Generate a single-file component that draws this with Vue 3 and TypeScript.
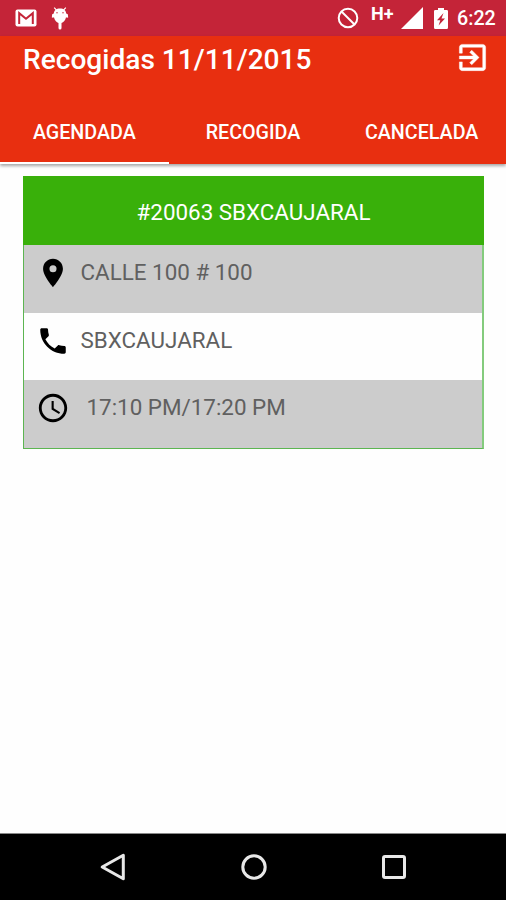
<script setup lang="ts">
interface Detail {
  kind: string
  icon: string
  text: string
}

const tabs: string[] = ['AGENDADA', 'RECOGIDA', 'CANCELADA']
const activeTab = 'AGENDADA'

const details: Detail[] = [
  {
    kind: 'address',
    icon: 'M12 2C8.13 2 5 5.13 5 9c0 5.25 7 13 7 13s7-7.75 7-13c0-3.87-3.13-7-7-7zm0 9.5a2.5 2.5 0 0 1 0-5 2.5 2.5 0 0 1 0 5z',
    text: 'CALLE 100 # 100',
  },
  {
    kind: 'contact',
    icon: 'M6.62 10.79c1.44 2.83 3.76 5.14 6.59 6.59l2.2-2.2c.27-.27.67-.36 1.02-.24 1.12.37 2.33.57 3.57.57.55 0 1 .45 1 1V20c0 .55-.45 1-1 1-9.39 0-17-7.61-17-17 0-.55.45-1 1-1h3.5c.55 0 1 .45 1 1 0 1.25.2 2.45.57 3.57.11.35.03.74-.25 1.02l-2.2 2.2z',
    text: 'SBXCAUJARAL',
  },
  {
    kind: 'time',
    icon: 'M11.99 2C6.47 2 2 6.48 2 12s4.47 10 9.99 10C17.52 22 22 17.52 22 12S17.52 2 11.99 2zM12 20c-4.42 0-8-3.58-8-8s3.58-8 8-8 8 3.58 8 8-3.58 8-8 8zm.5-13H11v6l5.25 3.15.75-1.23-4.5-2.67z',
    text: '17:10 PM/17:20 PM',
  },
]
</script>

<template>
  <div class="screen">
    <div class="status">
      <svg class="gmail" viewBox="0 0 22 18">
        <rect x="0.5" y="0.5" width="21" height="17" rx="2" fill="#fff" />
        <path d="M4.2 15V4.2L11 9.8l6.8-5.6V15" fill="none" stroke="#c42438" stroke-width="2" />
      </svg>
      <svg class="droid" viewBox="0 0 18 23">
        <path d="M3.2.6l2.3 2.5M14.8.6l-2.3 2.5" stroke="#fff" stroke-width="1.2" />
        <path d="M9 1.6c3.700 0 6 2 6.200 5l1.600.6.400 3.300-1.600.2-.5-.7C14.500 13.500 12.500 15.400 10.500 16v5a1.500 1.500 0 0 1-3 0v-5C5.500 15.400 3.500 13.500 2.900 10l-.5.7-1.600-.2.400-3.300 1.600-.6C3 3.600 5.300 1.600 9 1.600z" fill="#fff" />
        <circle cx="6" cy="5.800" r="0.700" fill="#c42438" />
        <circle cx="12" cy="5.800" r="0.700" fill="#c42438" />
      </svg>
      <span class="spacer"></span>
      <svg class="blocked" viewBox="0 0 22 22">
        <circle cx="11" cy="11" r="9.300" fill="none" stroke="#fff" stroke-width="2" />
        <path d="M4.500 4.500l13 13" stroke="#fff" stroke-width="2" />
      </svg>
      <span class="network">H+</span>
      <svg class="signal" viewBox="0 0 22 22"><path d="M22 0v22H0z" fill="#fff" /></svg>
      <svg class="battery" viewBox="0 0 14 21">
        <path d="M4 0h6v2h2.700q1.300 0 1.300 1.300v16.200q0 1.500-1.300 1.500H1.300Q0 21 0 19.500V3.300Q0 2 1.300 2H4z" fill="#fff" />
        <path d="M9.500 5L3 12.300h3.300L4.600 17.500 11 10.500H7.500z" fill="#c42438" />
      </svg>
      <span class="clock">6:22</span>
    </div>

    <header class="appbar">
      <div class="toolbar">
        <h1 class="title">Recogidas 11/11/2015</h1>
        <svg class="exit" viewBox="0 0 24 24">
          <path d="M10.090 15.590L11.500 17l5-5-5-5-1.410 1.410L12.670 11H3v2h9.670l-2.580 2.590zM19 3H5c-1.110 0-2 .9-2 2v4h2V5h14v14H5v-4H3v4c0 1.100.890 2 2 2h14c1.100 0 2-.9 2-2V5c0-1.100-.9-2-2-2z" />
        </svg>
      </div>
      <nav class="tabs">
        <div v-for="tab in tabs" :key="tab" class="tab" :class="{ active: tab === activeTab }">
          <span>{{ tab }}</span>
        </div>
      </nav>
    </header>

    <main class="content">
      <article class="card">
        <h2 class="card-title">#20063 SBXCAUJARAL</h2>
        <div v-for="d in details" :key="d.kind" class="row" :class="d.kind">
          <svg class="row-icon" viewBox="0 0 24 24"><path :d="d.icon" /></svg>
          <span class="row-text">{{ d.text }}</span>
        </div>
      </article>
    </main>

    <footer class="navbar">
      <svg viewBox="0 0 28 28"><path d="M24.300 2.200v23.600L3.200 14z" /></svg>
      <svg viewBox="0 0 28 28"><circle cx="14" cy="14" r="11.200" /></svg>
      <svg viewBox="0 0 28 28"><rect x="3.500" y="3.500" width="21" height="21" rx="1.500" /></svg>
    </footer>
  </div>
</template>

<style>
body {
  margin: 0;
  background: #fefefe;
}
</style>

<style scoped>
.screen {
  width: 506px;
  height: 900px;
  display: flex;
  flex-direction: column;
  overflow: hidden;
  background: #fefefe;
  font-family: Roboto, "Liberation Sans", sans-serif;
}
svg {
  display: block;
  flex: none;
}
.status {
  flex: none;
  box-sizing: border-box;
  height: 36px;
  padding: 0 10px 0 15px;
  display: flex;
  align-items: center;
  background: #c42438;
  color: #fff;
}
.gmail {
  width: 22px;
  height: 18px;
}
.droid {
  width: 18px;
  height: 23px;
  margin-left: 14px;
}
.spacer {
  flex: 1;
}
.blocked {
  width: 22px;
  height: 22px;
}
.network {
  width: 24px;
  margin: 0 6px 9px 12px;
  font-size: 18px;
  line-height: 18px;
  font-weight: 700;
}
.signal {
  width: 22px;
  height: 22px;
}
.battery {
  width: 14px;
  height: 21px;
  margin: 0 9px 0 11px;
}
.clock {
  width: 39px;
  padding-top: 2px;
  font-size: 19.7px;
  line-height: 34px;
  font-weight: 500;
  white-space: nowrap;
}
.appbar {
  flex: none;
  height: 128px;
  display: flex;
  flex-direction: column;
  background: #e82f10;
  color: #fff;
  box-shadow: 0 2px 3px rgba(0, 0, 0, 0.35);
}
.toolbar {
  height: 67px;
  padding: 4px 16px 0 23px;
  box-sizing: border-box;
  display: flex;
  justify-content: space-between;
  align-items: flex-start;
}
.title {
  margin: 0;
  padding-top: 2px;
  font-size: 28.1px;
  line-height: 36px;
  font-weight: 500;
  white-space: nowrap;
}
.exit {
  width: 35px;
  height: 35px;
  fill: #fff;
  stroke: #fff;
  stroke-width: 0.3;
}
.tabs {
  flex: 1;
  display: grid;
  grid-template-columns: repeat(3, 1fr);
}
.tab {
  box-sizing: border-box;
  padding-top: 18px;
  text-align: center;
  font-size: 19.7px;
  line-height: 24px;
  font-weight: 500;
}
.tab.active {
  border-bottom: 2px solid #fff;
}
.content {
  flex: 1;
  padding: 12px 22px 0 23px;
}
.card {
  border: 1px solid #5cb551;
  border-right: 2px solid #84cb7d;
  border-top: 0;
  height: 272px;
  width: 458px;
  display: flex;
  flex-direction: column;
}
.card-title {
  box-sizing: border-box;
  height: 69px;
  margin: 0 -2px 0 -1px;
  background: #39b00a;
  color: #fff;
  text-align: center;
  font-size: 22.4px;
  line-height: 73px;
  font-weight: 400;
}
.row {
  flex: 1;
  display: flex;
  align-items: flex-start;
  padding: 11px 0 0 11.5px;
  box-sizing: border-box;
  background: #ccc;
}
.row.contact {
  background: #fefefe;
}
.row-icon {
  width: 34px;
  height: 34px;
}
.row-text {
  margin-left: 11px;
  font-size: 22.4px;
  line-height: 32px;
  color: #606060;
  white-space: pre;
}
.time .row-text {
  margin-left: 17px;
}
.navbar {
  flex: none;
  height: 67px;
  box-sizing: border-box;
  border-top: 1px solid #888;
  background: #000;
  padding: 0 98px 1px 99px;
  display: flex;
  justify-content: space-between;
  align-items: center;
}
.navbar svg {
  width: 28px;
  height: 28px;
  fill: none;
  stroke: #e8e8e8;
  stroke-width: 3;
  stroke-linejoin: round;
}
</style>
